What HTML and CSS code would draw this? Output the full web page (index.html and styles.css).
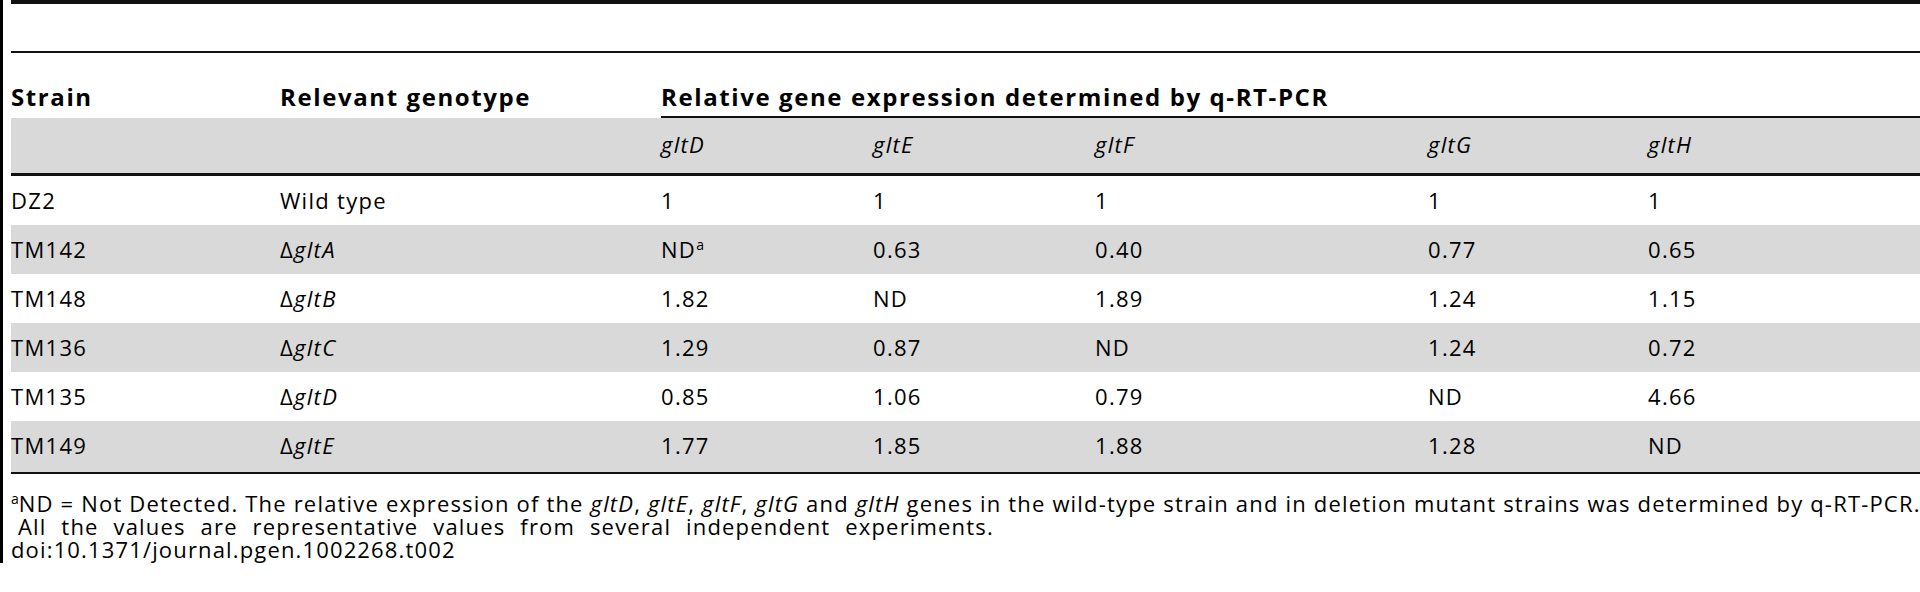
FILE: index.html
```html
<!DOCTYPE html>
<html lang="en">
<head>
<meta charset="utf-8">
<title>Table 2 – Relative gene expression</title>
<link rel="stylesheet" href="styles.css">
</head>
<body>
<div class="frame">
  <div class="topbar"></div>
  <table class="gtable">
    <colgroup>
      <col class="c-strain">
      <col class="c-geno">
      <col class="c-d">
      <col class="c-e">
      <col class="c-f">
      <col class="c-g">
      <col class="c-h">
    </colgroup>
    <thead>
      <tr class="h1">
        <th>Strain</th>
        <th>Relevant genotype</th>
        <th class="span" colspan="5">Relative gene expression determined by q-RT-PCR</th>
      </tr>
      <tr class="h2">
        <th></th>
        <th></th>
        <th><i>gltD</i></th>
        <th><i>gltE</i></th>
        <th><i>gltF</i></th>
        <th><i>gltG</i></th>
        <th><i>gltH</i></th>
      </tr>
    </thead>
    <tbody>
      <tr>
        <td>DZ2</td><td>Wild type</td><td>1</td><td>1</td><td>1</td><td>1</td><td>1</td>
      </tr>
      <tr class="alt">
        <td>TM142</td><td>Δ<i>gltA</i></td><td>ND<sup>a</sup></td><td>0.63</td><td>0.40</td><td>0.77</td><td>0.65</td>
      </tr>
      <tr>
        <td>TM148</td><td>Δ<i>gltB</i></td><td>1.82</td><td>ND</td><td>1.89</td><td>1.24</td><td>1.15</td>
      </tr>
      <tr class="alt">
        <td>TM136</td><td>Δ<i>gltC</i></td><td>1.29</td><td>0.87</td><td>ND</td><td>1.24</td><td>0.72</td>
      </tr>
      <tr>
        <td>TM135</td><td>Δ<i>gltD</i></td><td>0.85</td><td>1.06</td><td>0.79</td><td>ND</td><td>4.66</td>
      </tr>
      <tr class="alt last">
        <td>TM149</td><td>Δ<i>gltE</i></td><td>1.77</td><td>1.85</td><td>1.88</td><td>1.28</td><td>ND</td>
      </tr>
    </tbody>
  </table>
  <p class="footnote"><sup>a</sup>ND = Not Detected. The relative expression of the <i>gltD</i>, <i>gltE</i>, <i>gltF</i>, <i>gltG</i> and <i>gltH</i> genes in the wild-type strain and in deletion mutant strains was determined by q-RT-PCR.<br>&nbsp;<span class="wide">All the values are representative values from several independent experiments.</span></p>
  <p class="doi">doi:10.1371/journal.pgen.1002268.t002</p>
</div>
</body>
</html>
```
FILE: styles.css
```css
html, body {
  margin: 0;
  padding: 0;
  background: #ffffff;
}

body {
  width: 1920px;
  height: 592px;
  overflow: hidden;
  font-family: "Open Sans", "Noto Sans", "Liberation Sans", sans-serif;
  color: #000;
}

.frame {
  border-left: 3px solid #000;
  padding-left: 8px;
  padding-bottom: 2px;
}

.topbar {
  height: 4px;
  background: #111;
  margin-bottom: 47px;
}

.gtable {
  width: 1909px;
  table-layout: fixed;
  border-collapse: separate;
  border-spacing: 0;
  border-top: 2px solid #111;
  border-bottom: 2px solid #111;
}

.c-strain { width: 269px; }
.c-geno { width: 381px; }
.c-d { width: 212px; }
.c-e { width: 222px; }
.c-f { width: 333px; }
.c-g { width: 220px; }
.c-h { width: 272px; }

.gtable th,
.gtable td {
  padding: 0;
  text-align: left;
  white-space: nowrap;
}

.h1 { height: 65px; }

.h1 th {
  font-size: 24px;
  font-weight: 700;
  letter-spacing: 1.6px;
  line-height: 30px;
  vertical-align: bottom;
  padding-bottom: 4px;
  border-bottom: 2px solid transparent;
}

.h1 th.span {
  border-bottom-color: #111;
}

.h2 { height: 58px; }

.h2 th {
  background: #d9d9d9;
  font-size: 22px;
  font-weight: 400;
  letter-spacing: 1.3px;
  line-height: 30px;
  vertical-align: middle;
  padding-bottom: 4px;
  border-bottom: 3px solid #111;
}

.gtable tbody tr { height: 49px; }
.gtable tbody tr.last { height: 51px; }

.gtable td {
  font-size: 22px;
  letter-spacing: 1.3px;
  line-height: 30px;
  vertical-align: top;
  padding-top: 9px;
}

.gtable tr.alt td {
  background: #d9d9d9;
}

.gtable td sup {
  font-size: 14px;
  line-height: 0;
  vertical-align: 8px;
  letter-spacing: 0;
}

.footnote {
  margin: 18px 0 0 0;
  font-size: 22px;
  letter-spacing: 1.18px;
  line-height: 23px;
  white-space: nowrap;
}

.footnote sup {
  font-size: 14px;
  line-height: 0;
  vertical-align: 8px;
  letter-spacing: 0;
}

.footnote .wide {
  word-spacing: 8px;
}

.doi {
  margin: 0;
  font-size: 22px;
  letter-spacing: 1.15px;
  line-height: 23px;
  white-space: nowrap;
}
```
